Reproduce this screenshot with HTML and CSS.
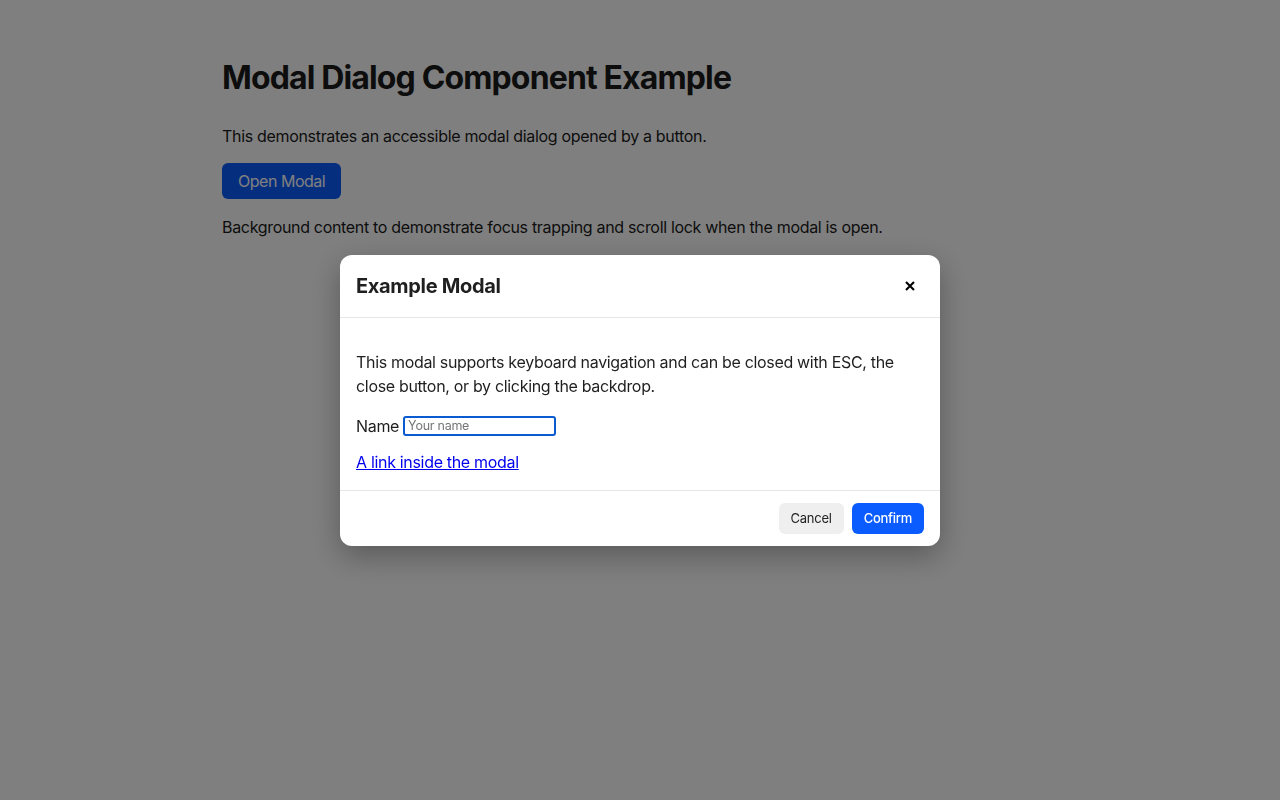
FILE: index.html
```html
<!DOCTYPE html>
<html lang="en">
<head>
<meta charset="utf-8">
<title>Modal Dialog Component Example</title>
<link rel="stylesheet" href="styles.css">
</head>
<body>
<main class="page">
  <h1 class="page-title">Modal Dialog Component Example</h1>
  <p class="page-text">This demonstrates an accessible modal dialog opened by a button.</p>
  <button class="open-btn" type="button">Open Modal</button>
  <p class="page-text">Background content to demonstrate focus trapping and scroll lock when the modal is open.</p>
</main>

<div class="backdrop">
  <div class="modal" role="dialog" aria-modal="true" aria-labelledby="modal-title">
    <header class="modal-header">
      <h2 class="modal-title" id="modal-title">Example Modal</h2>
      <button class="close-btn" type="button" aria-label="Close">
        <svg class="close-icon" viewBox="0 0 10 10" width="10" height="10" aria-hidden="true">
          <path d="M1 1 L9 9 M9 1 L1 9" stroke="#000" stroke-width="2.1" stroke-linecap="butt" fill="none"/>
        </svg>
      </button>
    </header>
    <div class="modal-body">
      <p class="modal-text">This modal supports keyboard navigation and can be closed with ESC, the close button, or by clicking the backdrop.</p>
      <div class="field">
        <label class="field-label" for="name">Name</label>
        <input class="field-input" id="name" type="text" placeholder="Your name">
      </div>
      <p class="link-row"><a class="modal-link" href="#">A link inside the modal</a></p>
    </div>
    <footer class="modal-footer">
      <button class="btn btn-cancel" type="button">Cancel</button>
      <button class="btn btn-confirm" type="button">Confirm</button>
    </footer>
  </div>
</div>
</body>
</html>
```

FILE: styles.css
```css
html, body {
  margin: 0;
  padding: 0;
  height: 100%;
}

body {
  font-family: Inter, "Noto Sans", "Liberation Sans", sans-serif;
  color: #1a1a1a;
  background: #ffffff;
  letter-spacing: -0.02em;
}

.page {
  max-width: 836px;
  margin: 0 auto;
  padding-top: 59px;
}

.page-title {
  margin: 0 0 27px;
  font-size: 32px;
  line-height: 38px;
  font-weight: 700;
  letter-spacing: -0.027em;
}

.page-text {
  margin: 0 0 16px;
  font-size: 16px;
  line-height: 24px;
}

.open-btn {
  display: block;
  margin: -1px 0 16px;
  padding: 8px 16px;
  font-family: inherit;
  font-size: 16px;
  line-height: 20px;
  letter-spacing: -0.03em;
  color: #ffffff;
  background: #0a5cff;
  border: none;
  border-radius: 6px;
}

.backdrop {
  position: fixed;
  inset: 0;
  background: rgba(0, 0, 0, 0.5);
  display: flex;
  align-items: center;
  justify-content: center;
}

.modal {
  width: 600px;
  background: #ffffff;
  border-radius: 12px;
  box-shadow: 0 10px 30px rgba(0, 0, 0, 0.3);
  overflow: hidden;
}

.modal-header {
  display: flex;
  align-items: center;
  justify-content: space-between;
  padding: 16px;
  border-bottom: 1px solid #e6e6e6;
}

.modal-title {
  margin: 0;
  font-size: 20px;
  line-height: 30px;
  font-weight: 700;
  color: #1f1f1f;
}

.close-btn {
  width: 28px;
  height: 28px;
  padding: 0;
  border: none;
  background: transparent;
  display: flex;
  align-items: center;
  justify-content: center;
}

.close-icon {
  display: block;
  width: 10px;
  height: 10px;
}

.modal-body {
  padding: 16px;
}

.modal-text {
  margin: 16px 0;
  font-size: 16px;
  line-height: 24px;
  color: #1f1f1f;
}

.field {
  display: flex;
  align-items: center;
  gap: 4px;
  height: 24px;
  margin-bottom: 12px;
}

.field-label {
  font-size: 16px;
  line-height: 24px;
  color: #1f1f1f;
}

.field-input {
  box-sizing: border-box;
  width: 153px;
  height: 20px;
  padding: 0 3px;
  font-family: inherit;
  font-size: 12.5px;
  letter-spacing: -0.02em;
  color: #1f1f1f;
  border: 2px solid #0a5ad0;
  border-radius: 3px;
  outline: none;
}

.field-input::placeholder {
  color: #767676;
}

.link-row {
  margin: 0;
  font-size: 16px;
  line-height: 24px;
}

.modal-link {
  color: #0000ee;
  text-decoration: underline;
}

.modal-footer {
  display: flex;
  justify-content: flex-end;
  gap: 8px;
  padding: 12px 16px;
  border-top: 1px solid #e6e6e6;
}

.btn {
  font-family: inherit;
  font-size: 13px;
  line-height: 19px;
  letter-spacing: -0.02em;
  padding: 6px 12px;
  border: none;
  border-radius: 6px;
}

.btn-cancel {
  background: #efefef;
  color: #222222;
}

.btn-confirm {
  background: #0a5cff;
  color: #ffffff;
  font-weight: 500;
}
```
